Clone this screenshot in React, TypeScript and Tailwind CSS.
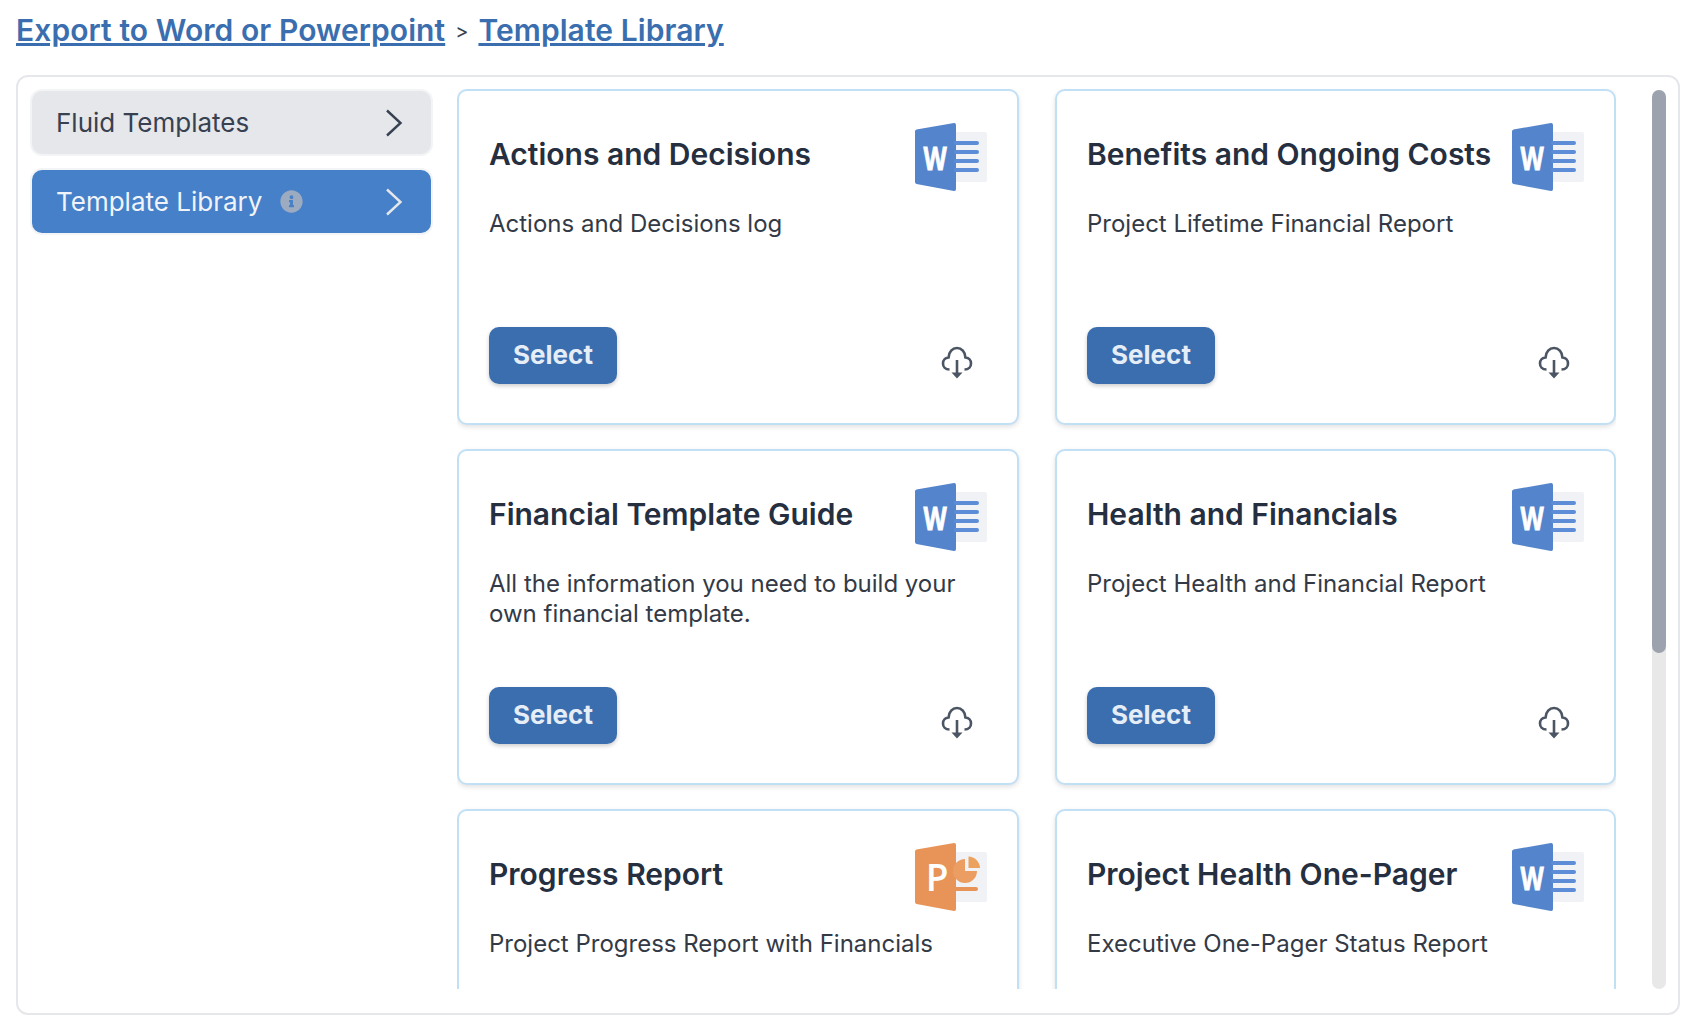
import { FaInfoCircle } from 'react-icons/fa';

interface Template {
  title: string;
  description: string;
  kind: 'word' | 'powerpoint';
}

const templates: Template[] = [
  { title: 'Actions and Decisions', description: 'Actions and Decisions log', kind: 'word' },
  { title: 'Benefits and Ongoing Costs', description: 'Project Lifetime Financial Report', kind: 'word' },
  { title: 'Financial Template Guide', description: 'All the information you need to build your own financial template.', kind: 'word' },
  { title: 'Health and Financials', description: 'Project Health and Financial Report', kind: 'word' },
  { title: 'Progress Report', description: 'Project Progress Report with Financials', kind: 'powerpoint' },
  { title: 'Project Health One-Pager', description: 'Executive One-Pager Status Report', kind: 'word' },
];

function Chevron({ color }: { color: string }) {
  return (
    <svg width="18" height="28" viewBox="0 0 18 28" fill="none" stroke={color} strokeWidth="2.4">
      <polyline points="2,1.5 15.5,14 2,26.5" />
    </svg>
  );
}

function WordIcon() {
  return (
    <svg width="74" height="70" viewBox="0 0 74 70" className="mr-[-1px] shrink-0">
      <rect x="38" y="10" width="35" height="50" rx="2" fill="#f0f2f5" />
      <path d="M2.5 7.5 L40 1 Q42 0.8 42 3 L42 67 Q42 69.2 40 69 L2.5 62 Q1 61.7 1 60 L1 9.5 Q1 7.8 2.5 7.5 Z" fill="#5484cb" />
      <g stroke="#5c8dd6" strokeWidth="4" strokeLinecap="round">
        <line x1="42" y1="21" x2="63" y2="21" />
        <line x1="42" y1="30" x2="63" y2="30" />
        <line x1="42" y1="39" x2="63" y2="39" />
        <line x1="42" y1="48" x2="63" y2="48" />
      </g>
      <text transform="translate(21 48) scale(0.8 1.1)" textAnchor="middle" fill="#ffffff" stroke="#ffffff" strokeWidth="0.8" fontSize="30" fontWeight="700" fontFamily="'Open Sans', sans-serif">W</text>
    </svg>
  );
}

function PowerpointIcon() {
  return (
    <svg width="74" height="70" viewBox="0 0 74 70" className="mr-[-1px] shrink-0">
      <rect x="38" y="10" width="35" height="50" rx="2" fill="#f0f2f5" />
      <path d="M2.5 7.5 L40 1 Q42 0.8 42 3 L42 67 Q42 69.2 40 69 L2.5 62 Q1 61.7 1 60 L1 9.5 Q1 7.8 2.5 7.5 Z" fill="#e89458" />
      <path d="M51 17 A12 12 0 1 0 63 29 L51 29 Z" fill="#ec9d62" />
      <path d="M54.5 14.5 A12 12 0 0 1 66 26 L54.5 26 Z" fill="#eba25f" />
      <line x1="42" y1="47" x2="62" y2="47" stroke="#e89458" strokeWidth="4" strokeLinecap="round" />
      <text x="23" y="49" textAnchor="middle" fill="#ffffff" fontSize="37" fontWeight="600" fontFamily="'Open Sans', sans-serif">P</text>
    </svg>
  );
}

function CloudDownload() {
  return (
    <svg width="32" height="34" viewBox="0 0 32 34" fill="none" stroke="#4b5563" strokeWidth="2.6">
      <path d="M8.5 23.5 C4 23.5 2 20.5 2 17.5 C2 14 4.6 11.6 7.6 11.4 C7.8 6 11.4 2 16 2 C20.6 2 24.2 6 24.4 11.4 C27.4 11.6 30 14 30 17.5 C30 20.5 28 23.5 23.5 23.5" />
      <line x1="16" y1="14" x2="16" y2="30" />
      <path d="M10.5 26.5 L16 32.5 L21.5 26.5 Z" fill="#4b5563" stroke="none" />
    </svg>
  );
}

function TemplateCard({ template }: { template: Template }) {
  return (
    <div className="flex h-[336px] flex-col rounded-[10px] border-2 border-[#c2e0f5] bg-white pt-[31px] pr-[30px] pb-[39px] pl-[30px] shadow-[0_2px_5px_rgba(0,0,0,0.12)]">
      <div className="flex items-start justify-between">
        <h2 className="mt-[14px] text-[30px] leading-[36px] font-semibold whitespace-nowrap text-[#252f3f]">{template.title}</h2>
        {template.kind === 'word' ? <WordIcon /> : <PowerpointIcon />}
      </div>
      <p className="mt-[17px] text-[24px] leading-[30px] text-[#333a46]">{template.description}</p>
      <div className="mt-auto flex items-end justify-between">
        <button className="h-[57px] w-[128px] rounded-[10px] bg-[#3b6eae] pb-[2px] text-[26px] font-bold text-[#e5edf7] shadow-[0_2px_4px_rgba(0,0,0,0.2)]">
          Select
        </button>
        <div className="mr-[14px] mb-[4px]">
          <CloudDownload />
        </div>
      </div>
    </div>
  );
}

export default function App() {
  return (
    <div className="h-[1030px] overflow-hidden bg-white px-4 font-['Inter',sans-serif]">
      <div className="flex h-[61px] items-center text-[20px] text-[#374151]">
        <a className="text-[30px] font-semibold tracking-[0.08px] text-[#3b6eae] underline">Export to Word or Powerpoint</a>
        <span className="mx-[10px]">&gt;</span>
        <a className="text-[30px] font-semibold tracking-[0.08px] text-[#3b6eae] underline">Template Library</a>
      </div>

      <div className="mt-[14px] flex h-[940px] w-[1664px] items-start rounded-[12px] border-2 border-[#e5e7eb] pt-[12px] pr-[12px] pl-[14px]">
        {/* Sidebar */}
        <div className="mt-[2px] flex w-[399px] shrink-0 flex-col gap-4">
          <button className="flex h-[63px] items-center justify-between rounded-[10px] bg-[#e5e7eb] pr-[28px] pl-6 text-[26px] text-[#374151] shadow-[0_0_0_2px_#f3f4f6]">
            Fluid Templates
            <Chevron color="#374151" />
          </button>
          <button className="flex h-[63px] items-center justify-between rounded-[10px] bg-[#4680c8] pr-[28px] pl-6 text-[26px] text-[#f0f4fa] shadow-[0_0_0_2px_#f3f4f6]">
            <span className="flex items-center gap-[18px]">
              Template Library
              <FaInfoCircle className="text-[23px] text-[#9dabc0]" />
            </span>
            <Chevron color="#e5e7eb" />
          </button>
        </div>

        {/* Template cards */}
        <div className="ml-[26px] h-[900px] w-[1159px] shrink-0 overflow-hidden">
          <div className="grid grid-cols-[562px_561px] gap-x-[36px] gap-y-[24px]">
            {templates.map((template) => (
              <TemplateCard key={template.title} template={template} />
            ))}
          </div>
        </div>

        {/* Scrollbar */}
        <div className="mt-[1px] ml-[36px] h-[899px] w-[14px] shrink-0 rounded-full bg-[#e8e8e8]">
          <div className="h-[563px] rounded-full bg-[#9ca3af]" />
        </div>
      </div>
    </div>
  );
}
